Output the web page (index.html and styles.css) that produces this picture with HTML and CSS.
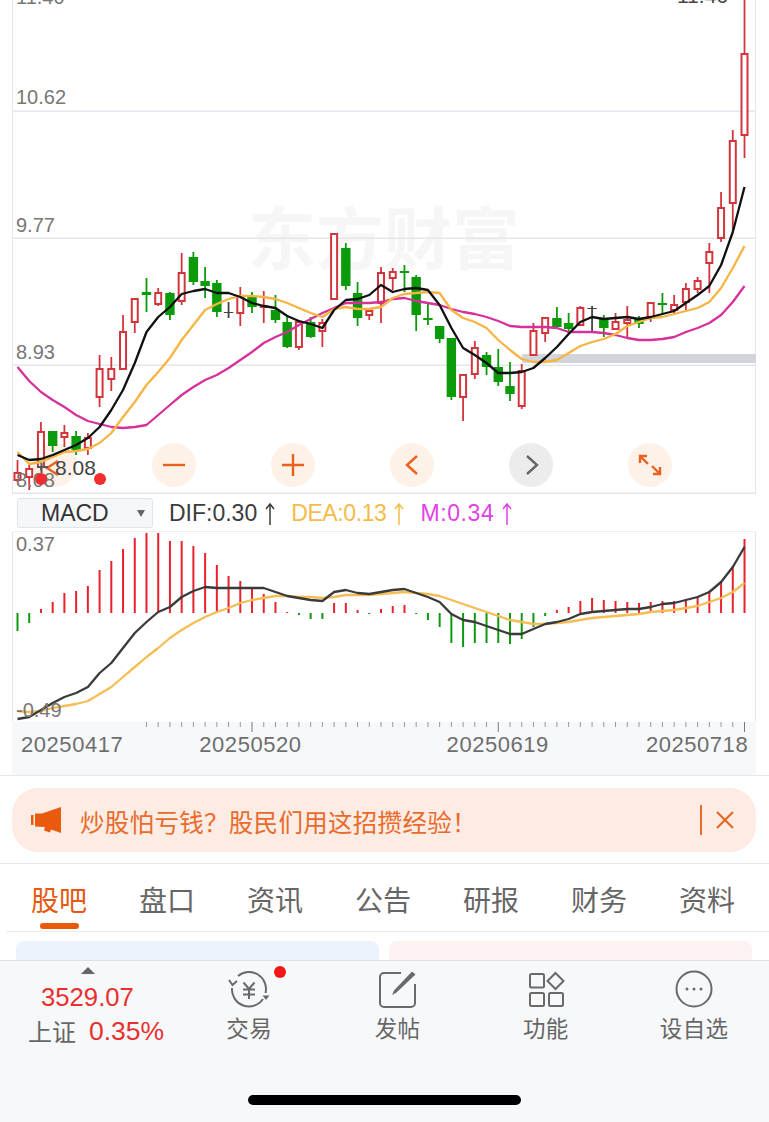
FILE: index.html
```html
<!DOCTYPE html>
<html lang="zh-CN">
<head>
    <meta charset="UTF-8">
    <meta name="viewport" content="width=device-width, initial-scale=1.0">
    <title>K线</title>
    <link rel="stylesheet" href="styles.css">
</head>
<body>
    <div class="page">
        <section class="kline">
            <div class="chart-buttons">
                <div class="round-btn">
                    <svg viewBox="0 0 44 44" width="44" height="44"><path class="btn-icon" d="M25 18l-11 7 11 7"/></svg>
                </div>
                <div class="round-btn">
                    <svg viewBox="0 0 44 44" width="44" height="44"><path class="btn-icon" d="M11 22h22"/></svg>
                </div>
                <div class="round-btn">
                    <svg viewBox="0 0 44 44" width="44" height="44"><path class="btn-icon" d="M11 22h22M22 11v22"/></svg>
                </div>
                <div class="round-btn">
                    <svg viewBox="0 0 44 44" width="44" height="44"><path class="btn-icon" d="M27 13l-10 9 10 9"/></svg>
                </div>
                <div class="round-btn round-btn-gray">
                    <svg viewBox="0 0 44 44" width="44" height="44"><path class="btn-icon" d="M18 13l10 9-10 9"/></svg>
                </div>
                <div class="round-btn">
                    <svg viewBox="0 0 44 44" width="44" height="44"><path class="btn-icon" d="M12 20v-7h7M12 13l8 8M32 24v7h-7M32 31l-8-8"/></svg>
                </div>
            </div>
            <svg id="kline-chart" class="kline-svg" viewBox="0 0 769 494" width="769" height="494">
                <text class="watermark" x="248" y="264">东方财富</text>
                <g id="kline-grid"></g>
                <g id="kline-candles"></g>
                <g id="kline-lines"></g>
                <text class="axis-num" x="16" y="4">11.40</text>
                <text class="axis-num" x="16" y="104">10.62</text>
                <text class="axis-num" x="16" y="232">9.77</text>
                <text class="axis-num" x="16" y="359">8.93</text>
                <text class="axis-num" x="16" y="487">8.08</text>
                <text class="peak-num" x="677" y="3">11.46</text>
                <text class="peak-num" x="55" y="475">8.08</text>
                <path class="peak-mark" d="M37 467h11M41.500 463v10"/>
            </svg>
            <div class="band-dot band-dot-a"></div>
            <div class="band-dot band-dot-b"></div>
        </section>

        <section class="macd-bar">
            <div class="macd-select">
                <span>MACD</span>
                <i class="select-caret"></i>
            </div>
            <span class="macd-val val-dif">DIF:0.30<svg viewBox="0 0 10 24" width="10" height="24"><path d="M5 23V2M1 7l4-5 4 5"/></svg></span>
            <span class="macd-val val-dea">DEA:0.13<svg viewBox="0 0 10 24" width="10" height="24"><path d="M5 23V2M1 7l4-5 4 5"/></svg></span>
            <span class="macd-val val-m">M:0.34<svg viewBox="0 0 10 24" width="10" height="24"><path d="M5 23V2M1 7l4-5 4 5"/></svg></span>
        </section>

        <section class="macd">
            <svg id="macd-chart" class="macd-svg" viewBox="0 532 743 190" width="743" height="190">
                <g id="macd-bars"></g>
                <g id="macd-lines"></g>
                <text class="axis-num" x="3" y="551">0.37</text>
                <text class="axis-num" x="3" y="717">-0.49</text>
            </svg>
        </section>

        <section class="time-axis">
            <svg id="time-ticks" class="time-ticks" viewBox="0 0 743 11" width="743" height="11"></svg>
            <div class="time-labels">
                <span>20250417</span>
                <span class="date-b">20250520</span>
                <span class="date-c">20250619</span>
                <span class="date-d">20250718</span>
            </div>
        </section>

        <section class="notice">
            <svg class="notice-horn" viewBox="0 0 30 26" width="30" height="26">
                <path d="M0 8h2.500v10H0zM4 6.500h7L30 0v26l-10-3.500-1 3-6-2 1-3.600L4 19.500z"/>
            </svg>
            <span class="notice-text">炒股怕亏钱&#xFF1F;股民们用这招攒经验&#xFF01;</span>
            <i class="notice-sep"></i>
            <svg class="notice-close" viewBox="0 0 18 18" width="18" height="18">
                <path d="M1 1l16 16M17 1L1 17"/>
            </svg>
        </section>

        <nav class="tabs">
            <a class="tab active">股吧</a>
            <a class="tab">盘口</a>
            <a class="tab">资讯</a>
            <a class="tab">公告</a>
            <a class="tab">研报</a>
            <a class="tab">财务</a>
            <a class="tab">资料</a>
        </nav>

        <section class="cards">
            <div class="card card-blue"></div>
            <div class="card card-pink"></div>
        </section>

        <footer class="bottom-bar">
            <div class="bottom-row">
                <div class="index-box">
                    <i class="index-caret"></i>
                    <div class="index-price">3529.07</div>
                    <div class="index-line"><span class="index-name">上证</span><span class="index-pct">0.35%</span></div>
                </div>
                <div class="bottom-item has-dot">
                    <svg viewBox="0 0 44 40" width="44" height="40">
                        <path class="bar-icon" d="M11 7A17 17 0 0 1 38.500 24M36 30A17 17 0 0 1 5 19M2 11l3.500 5 4.500-4"/>
                        <path class="bar-fill" d="M35.500 26.500h7L39 31z"/>
                        <path class="bar-icon" d="M16.500 13.500l5.500 6.500 5.500-6.500M16 20.500h12M16 25.500h12M22 20v10"/>
                    </svg>
                    <span>交易</span>
                </div>
                <div class="bottom-item">
                    <svg viewBox="0 0 44 40" width="44" height="40">
                        <path class="bar-icon" d="M26 4H9a4 4 0 0 0-4 4v26a4 4 0 0 0 4 4h27a4 4 0 0 0 4-4V15"/>
                        <path class="bar-fill" d="M37 2.500l3.500 3-19 18-4.500 2.500 2-4.500z"/>
                    </svg>
                    <span>发帖</span>
                </div>
                <div class="bottom-item">
                    <svg viewBox="0 0 44 40" width="44" height="40">
                        <rect class="bar-icon" x="6" y="5" width="14" height="13.500" rx="1.500"/>
                        <path class="bar-icon" d="M31.500 4l8 8-8 8-8-8z"/>
                        <rect class="bar-icon" x="6" y="24" width="14" height="13" rx="1.500"/>
                        <rect class="bar-icon" x="25" y="24" width="14" height="13" rx="1.500"/>
                    </svg>
                    <span>功能</span>
                </div>
                <div class="bottom-item">
                    <svg viewBox="0 0 44 40" width="44" height="40">
                        <circle class="bar-icon" cx="22" cy="20" r="17.500"/>
                        <circle class="bar-fill" cx="15" cy="20" r="1.500"/>
                        <circle class="bar-fill" cx="22" cy="20" r="1.500"/>
                        <circle class="bar-fill" cx="29" cy="20" r="1.500"/>
                    </svg>
                    <span>设自选</span>
                </div>
            </div>
            <div class="home-bar"></div>
        </footer>
    </div>
    <script src="chart.js"></script>
</body>
</html>
```

FILE: styles.css
```css
body, html {
    margin: 0;
    padding: 0;
    width: 100%;
    height: 100%;
    overflow: hidden;
    background: #fff;
}
body {
    font-family: "Liberation Sans", "Noto Sans CJK SC", sans-serif;
}
.page {
    width: 769px;
    height: 1122px;
    display: flex;
    flex-direction: column;
    overflow: hidden;
}

/* k-line panel */
.kline {
    position: relative;
    height: 494px;
    flex: none;
}
.kline-svg {
    display: block;
    position: relative;
    z-index: 1;
}
.watermark {
    font-family: "Noto Sans CJK SC", sans-serif;
    font-size: 68px;
    font-weight: 700;
    fill: #f6f6f6;
}
.axis-num {
    font-size: 20px;
    fill: #777;
}
.peak-num {
    font-size: 21px;
    fill: #444;
}
.peak-mark {
    fill: none;
    stroke: #555;
    stroke-width: 2;
}
.chart-buttons {
    position: absolute;
    left: 33px;
    top: 443px;
    display: flex;
    gap: 75px;
}
.round-btn {
    width: 44px;
    height: 44px;
    border-radius: 50%;
    background: rgba(252, 236, 224, 0.75);
}
.round-btn svg {
    display: block;
}
.btn-icon {
    fill: none;
    stroke: #e9611c;
    stroke-width: 2.400;
}
.round-btn-gray {
    background: #ececec;
}
.round-btn-gray .btn-icon {
    stroke: #666;
}
.band-dot {
    position: absolute;
    z-index: 2;
    top: 473px;
    width: 12px;
    height: 12px;
    border-radius: 50%;
    background: #f22d2d;
}
.band-dot-a {
    left: 35px;
}
.band-dot-b {
    left: 94px;
}

/* macd header */
.macd-bar {
    height: 38px;
    flex: none;
    display: flex;
    align-items: center;
    padding-left: 17px;
    box-sizing: border-box;
}
.macd-select {
    width: 136px;
    height: 30px;
    box-sizing: border-box;
    background: #f6f7f9;
    border: 1px solid #e2e4e8;
    border-radius: 3px;
    display: flex;
    align-items: center;
    justify-content: space-between;
    padding: 1px 7px 0 23px;
    font-size: 23px;
    color: #333;
}
.select-caret {
    width: 0;
    height: 0;
    border-left: 4.500px solid transparent;
    border-right: 4.500px solid transparent;
    border-top: 7px solid #666;
}
.macd-val {
    display: flex;
    align-items: center;
    gap: 8px;
    font-size: 23px;
    padding-top: 1px;
    margin-left: 16px;
}
.macd-val svg {
    fill: none;
    stroke: currentColor;
    stroke-width: 1.500;
}
.val-dif {
    color: #3c3c3c;
}
.val-dea {
    color: #f6bb4a;
    letter-spacing: -.4px;
}
.val-m {
    color: #e23fe6;
    letter-spacing: .6px;
}

/* macd chart */
.macd {
    height: 190px;
    flex: none;
    margin-left: 12px;
    width: 744px;
    box-sizing: border-box;
    border-left: 1px solid #e4e6ec;
    border-right: 1px solid #e4e6ec;
}
.macd-svg {
    display: block;
    border-top: 1px solid #eceef2;
    margin-top: -1px;
}
.time-axis {
    height: 53px;
    flex: none;
    margin-left: 12px;
    width: 744px;
    background: #f7f8fa;
}
.time-ticks {
    display: block;
    margin-left: 1px;
}
.time-labels {
    display: flex;
    margin-top: -1px;
    padding-left: 9px;
    font-size: 22px;
    letter-spacing: .55px;
    line-height: 26px;
    color: #6e6e6e;
}
.date-b {
    margin-left: 76px;
}
.date-c {
    margin-left: 145px;
}
.date-d {
    margin-left: 97px;
}

/* notice */
.notice {
    flex: none;
    height: 64px;
    margin: 13px 13px 11px 12px;
    box-sizing: border-box;
    padding: 0 22px 0 19px;
    border-radius: 26px;
    background: #fdece4;
    display: flex;
    align-items: center;
    position: relative;
}
.notice::before {
    content: "";
    position: absolute;
    left: -12px;
    right: -13px;
    top: -13px;
    height: 1px;
    background: #e8e8ea;
}
.notice-horn {
    fill: #ea5a0c;
    flex: none;
}
.notice-text {
    margin-left: 19px;
    padding-top: 2px;
    font-size: 24.500px;
    letter-spacing: .3px;
    color: #e96a2a;
    font-family: "Noto Sans CJK SC", sans-serif;
    white-space: nowrap;
}
.notice-sep {
    margin-left: auto;
    width: 2px;
    height: 30px;
    background: #e96a2a;
}
.notice-close {
    margin-left: 14px;
    fill: none;
    stroke: #e9611c;
    stroke-width: 2;
}

/* tabs */
.tabs {
    flex: none;
    height: 69px;
    box-sizing: border-box;
    border-top: 1px solid #e8e8ea;
    padding-left: 31px;
    display: flex;
    gap: 52px;
    position: relative;
}
.tabs::after {
    content: "";
    position: absolute;
    left: 6px;
    right: 0;
    bottom: 0;
    height: 1px;
    background: #ececee;
}
.tab {
    font-family: "Noto Sans CJK SC", sans-serif;
    font-size: 28px;
    line-height: 40px;
    width: 56px;
    padding-top: 15px;
    color: #666;
    position: relative;
    text-align: center;
}
.tab.active {
    color: #e65a0f;
}
.tab.active::after {
    content: "";
    position: absolute;
    left: 9px;
    top: 59px;
    width: 39px;
    height: 6px;
    border-radius: 3px;
    background: #e9590b;
}

/* cards peeking out behind the bottom bar */
.cards {
    flex: none;
    height: 28px;
    padding: 9px 17px 0 16px;
    box-sizing: border-box;
    display: flex;
    gap: 10px;
}
.card {
    flex: 1;
    border-radius: 8px 8px 0 0;
}
.card-blue {
    background: #edf3fd;
}
.card-pink {
    background: #fdf2f2;
}

/* bottom bar */
.bottom-bar {
    flex: 1;
    background: #f7f8fa;
    border-top: 1px solid #dcdfe6;
    box-sizing: border-box;
    color: #666;
    font-family: "Noto Sans CJK SC", sans-serif;
}
.bottom-row {
    display: flex;
    padding-left: 21px;
    height: 133px;
}
.index-box {
    width: 154px;
    flex: none;
    box-sizing: border-box;
    padding-top: 6px;
    display: flex;
    flex-direction: column;
    align-items: flex-start;
}
.index-caret {
    margin-left: 60px;
    width: 0;
    height: 0;
    border-left: 7px solid transparent;
    border-right: 7px solid transparent;
    border-bottom: 7px solid #666;
}
.index-price {
    margin: 8px 0 0 20px;
    font-family: "Liberation Sans", sans-serif;
    font-size: 25.700px;
    line-height: 30px;
    color: #e8302f;
}
.index-line {
    margin: 2px 0 0 7px;
    display: flex;
    align-items: center;
    gap: 13px;
    line-height: 34px;
}
.index-name {
    font-size: 24px;
}
.index-pct {
    font-family: "Liberation Sans", sans-serif;
    font-size: 26.500px;
    color: #e8302f;
}
.bottom-item {
    width: 148.300px;
    flex: none;
    display: flex;
    flex-direction: column;
    align-items: center;
    padding-top: 8px;
    font-size: 22.500px;
    letter-spacing: .3px;
    line-height: 30px;
    position: relative;
    box-sizing: border-box;
}
.bottom-item svg {
    display: block;
    margin-bottom: 3px;
}
.bar-icon {
    fill: none;
    stroke: #6a6a6a;
    stroke-width: 2;
}
.bar-fill {
    fill: #6a6a6a;
}
.has-dot::after {
    content: "";
    position: absolute;
    left: 99px;
    top: 5px;
    width: 12px;
    height: 12px;
    border-radius: 50%;
    background: #f6161a;
}
.home-bar {
    width: 273px;
    height: 10px;
    margin: 1px 0 0 248px;
    border-radius: 5px;
    background: #000;
}
```

FILE: chart.js
```js
// candle data in pixels: [bodyTop, bodyBottom, wickTop, wickBottom, kind]
// kind: r = up (hollow red), g = down (solid green), d = doji (dark)
const candles = [
    [473, 480, 460, 482, 'r'], [469, 477, 463, 490, 'r'], [432, 467, 422, 470, 'r'], [431, 446, 431, 452, 'g'],
    [433, 437, 425, 447, 'r'], [436, 450, 431, 455, 'g'], [438, 448, 433, 455, 'r'], [369, 397, 355, 407, 'r'],
    [369, 379, 357, 391, 'r'], [332, 369, 315, 369, 'r'], [299, 322, 299, 333, 'r'], [292, 295, 278, 312, 'g'],
    [293, 304, 288, 306, 'r'], [293, 315, 292, 320, 'g'], [273, 301, 253, 305, 'r'], [257, 282, 252, 285, 'g'],
    [281, 286, 267, 298, 'g'], [283, 312, 280, 317, 'g'], [312, 313, 302, 318, 'd'], [296, 313, 287, 326, 'r'],
    [297, 307, 292, 313, 'g'], [306, 307, 291, 323, 'r'], [310, 320, 295, 323, 'g'], [322, 347, 315, 348, 'g'],
    [322, 347, 320, 350, 'r'], [322, 337, 317, 338, 'g'], [323, 331, 319, 347, 'r'], [234, 299, 234, 299, 'r'],
    [248, 286, 243, 290, 'g'], [293, 318, 282, 326, 'g'], [311, 315, 310, 320, 'r'], [273, 303, 267, 323, 'r'],
    [272, 278, 268, 290, 'r'], [271, 273, 265, 292, 'g'], [277, 315, 275, 331, 'g'], [318, 320, 303, 325, 'g'],
    [326, 339, 326, 343, 'g'], [338, 397, 338, 400, 'g'], [375, 397, 375, 421, 'r'], [348, 374, 341, 379, 'r'],
    [355, 367, 352, 375, 'g'], [367, 382, 349, 386, 'g'], [386, 394, 362, 401, 'g'], [371, 406, 364, 409, 'r'],
    [331, 355, 323, 355, 'r'], [318, 333, 318, 342, 'r'], [318, 327, 307, 328, 'g'], [323, 329, 313, 333, 'g'],
    [308, 325, 306, 326, 'r'], [308, 309, 306, 333, 'd'], [318, 328, 315, 337, 'g'], [322, 329, 313, 330, 'r'],
    [320, 323, 306, 337, 'r'], [319, 324, 316, 328, 'g'], [303, 318, 303, 322, 'r'], [303, 305, 293, 315, 'g'],
    [305, 310, 295, 315, 'r'], [289, 302, 283, 310, 'r'], [281, 289, 277, 293, 'r'], [252, 263, 243, 293, 'r'],
    [208, 238, 192, 242, 'r'], [141, 203, 130, 230, 'r'], [54, 135, 0, 158, 'r']
];

const ma5 = [455, 460, 459, 455, 450, 445, 438, 427, 410, 390, 363, 332, 317, 307, 294, 291, 289, 293, 293, 297, 303, 306, 308, 316, 321, 324, 328, 310, 300, 299, 295, 285, 292, 289, 288, 290, 305, 328, 348, 355, 363, 373, 373, 372, 368, 358, 347, 334, 322, 317, 319, 318, 317, 319, 317, 314, 311, 303, 295, 286, 265, 232, 187];
const ma10 = [452, 464, 462, 457, 452, 451, 449, 443, 433, 417, 402, 385, 372, 358, 340, 325, 310, 304, 299, 296, 296, 297, 299, 303, 308, 313, 317, 309, 307, 309, 309, 307, 298, 294, 293, 292, 293, 310, 318, 322, 328, 340, 350, 359, 362, 362, 360, 353, 346, 342, 339, 334, 326, 322, 318, 317, 314, 311, 308, 302, 288, 268, 246];
const ma20 = [367, 381, 392, 400, 407, 415, 421, 424, 427, 428, 427, 425, 415, 405, 395, 387, 380, 375, 368, 360, 352, 343, 337, 332, 325, 319, 313, 308, 303, 303, 303, 302, 299, 298, 301, 303, 305, 309, 312, 314, 317, 321, 326, 327, 327, 327, 328, 332, 332, 332, 333, 335, 338, 340, 340, 339, 337, 332, 328, 323, 315, 302, 286];

// histogram tips, zero line is at y=613
const macdBars = [631, 623, 609, 602, 593, 591, 586, 570, 561, 549, 538, 533, 533, 541, 541, 546, 553, 565, 576, 581, 588, 594, 602, 612, 615, 619, 619, 603, 603, 610, 614, 609, 606, 605, 614, 620, 627, 643, 647, 643, 643, 643, 644, 639, 627, 616, 610, 607, 601, 598, 600, 601, 602, 603, 602, 601, 601, 600, 597, 591, 582, 566, 539];
const dif = [719, 717, 710, 703, 697, 693, 687, 673, 663, 648, 633, 622, 612, 607, 597, 591, 587, 588, 588, 588, 588, 588, 592, 596, 598, 600, 601, 592, 590, 593, 594, 592, 590, 589, 593, 597, 602, 614, 620, 622, 626, 630, 634, 634, 629, 624, 622, 619, 614, 612, 611, 610, 609, 609, 607, 604, 603, 600, 597, 592, 582, 567, 547];
const dea = [711, 712, 711, 708, 706, 704, 701, 694, 687, 677, 667, 657, 648, 638, 630, 623, 617, 612, 608, 603, 600, 598, 596, 596, 597, 597, 598, 597, 595, 595, 595, 594, 593, 592, 593, 594, 596, 600, 604, 608, 612, 616, 620, 622, 624, 624, 623, 622, 620, 618, 617, 616, 615, 614, 612, 611, 610, 608, 606, 602, 598, 592, 583];

const NS = 'http://www.w3.org/2000/svg';
const RED = '#d2353b';
const GREEN = '#0a9a0a';

function xAt(i) {
    return 17.5 + i * 11.726;
}

function add(parent, tag, attrs) {
    const el = document.createElementNS(NS, tag);
    Object.keys(attrs).forEach(k => el.setAttribute(k, attrs[k]));
    parent.appendChild(el);
    return el;
}

function drawLine(parent, ys, color, shift) {
    const pts = ys.map((y, i) => (xAt(i) + shift).toFixed(1) + ',' + y).join(' ');
    add(parent, 'polyline', { points: pts, fill: 'none', stroke: color, 'stroke-width': 2.3, 'stroke-linejoin': 'round' });
}

// grid
const grid = document.getElementById('kline-grid');
[111, 238, 365, 493].forEach(y => {
    add(grid, 'rect', { x: 12, y: y - 0.5, width: 744, height: 1.5, fill: '#e4e6ec' });
});
add(grid, 'rect', { x: 12, y: 0, width: 1, height: 494, fill: '#e4e6ec' });
add(grid, 'rect', { x: 755, y: 0, width: 1, height: 494, fill: '#e4e6ec' });
add(grid, 'rect', { x: 522, y: 354, width: 234, height: 9, fill: '#d2d5dc' });

// candles
const candleGroup = document.getElementById('kline-candles');
candles.forEach((c, i) => {
    const x = xAt(i);
    const color = c[4] === 'r' ? RED : c[4] === 'g' ? GREEN : '#444';
    add(candleGroup, 'line', { x1: x, x2: x, y1: c[2], y2: c[3], stroke: color, 'stroke-width': 1.8 });
    if (c[4] === 'r') {
        add(candleGroup, 'rect', { x: x - 3, y: c[0], width: 6, height: c[1] - c[0], fill: '#fff', stroke: color, 'stroke-width': 2 });
    } else {
        add(candleGroup, 'rect', { x: x - 4.7, y: c[0], width: 9.4, height: c[1] - c[0], fill: color });
    }
});

const lines = document.getElementById('kline-lines');
drawLine(lines, ma20, '#d6309a', 0);
drawLine(lines, ma10, '#f6b543', 0);
drawLine(lines, ma5, '#111', 0);

// macd, same x scale but the svg starts 13px in
const macdRoot = document.getElementById('macd-bars');
const macdLines = document.getElementById('macd-lines');
const shift = -13;
macdBars.forEach((y, i) => {
    const up = y < 613;
    add(macdRoot, 'rect', {
        x: xAt(i) + shift - 1,
        y: Math.min(y, 613),
        width: 2,
        height: Math.abs(y - 613),
        fill: up ? '#e9222b' : '#0e9a10'
    });
});
drawLine(macdLines, dea, '#f6bd55', shift);
drawLine(macdLines, dif, '#3a3a3a', shift);

// ticks under the macd chart
const ticks = document.getElementById('time-ticks');
for (let i = 11; i < 63; i++) {
    const big = i === 20 || i === 41 || i === 62;
    add(ticks, 'rect', { x: xAt(i) + shift - 0.5, y: 0, width: 1, height: big ? 10 : 5, fill: big ? '#777' : '#999' });
}
```
